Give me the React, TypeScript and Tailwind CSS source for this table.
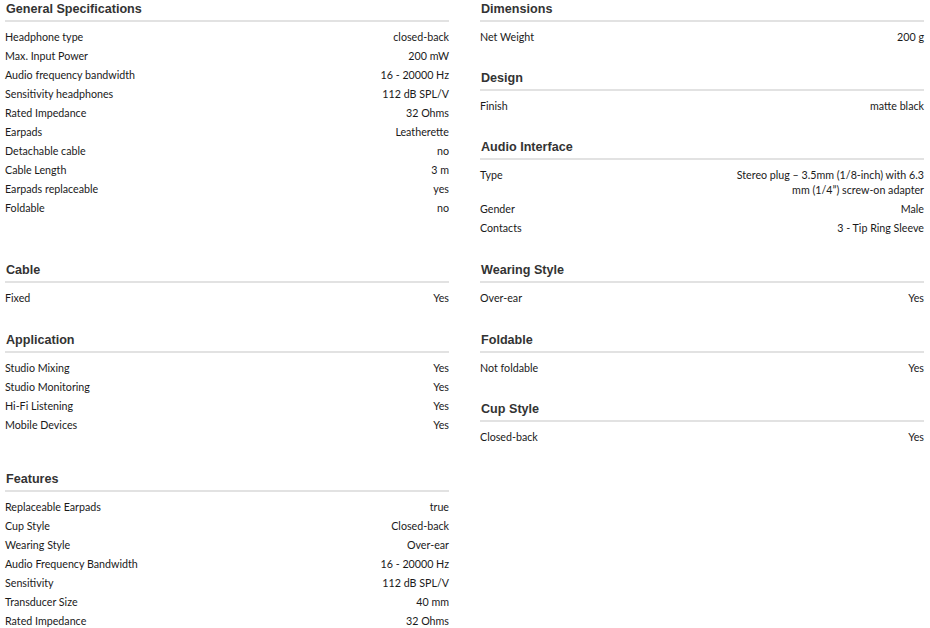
import React from 'react';

type Spec = [string, string];

interface Section {
  title: string;
  rows: Spec[];
}

const general: Section = {
  title: 'General Specifications',
  rows: [
    ['Headphone type', 'closed-back'],
    ['Max. Input Power', '200 mW'],
    ['Audio frequency bandwidth', '16 - 20000 Hz'],
    ['Sensitivity headphones', '112 dB SPL/V'],
    ['Rated Impedance', '32 Ohms'],
    ['Earpads', 'Leatherette'],
    ['Detachable cable', 'no'],
    ['Cable Length', '3 m'],
    ['Earpads replaceable', 'yes'],
    ['Foldable', 'no'],
  ],
};

const dimensions: Section = { title: 'Dimensions', rows: [['Net Weight', '200 g']] };
const design: Section = { title: 'Design', rows: [['Finish', 'matte black']] };
const audio: Section = {
  title: 'Audio Interface',
  rows: [
    ['Type', 'Stereo plug – 3.5mm (1/8-inch) with 6.3 mm (1/4”) screw-on adapter'],
    ['Gender', 'Male'],
    ['Contacts', '3 - Tip Ring Sleeve'],
  ],
};
const cable: Section = { title: 'Cable', rows: [['Fixed', 'Yes']] };
const wearing: Section = { title: 'Wearing Style', rows: [['Over-ear', 'Yes']] };
const application: Section = {
  title: 'Application',
  rows: [
    ['Studio Mixing', 'Yes'],
    ['Studio Monitoring', 'Yes'],
    ['Hi-Fi Listening', 'Yes'],
    ['Mobile Devices', 'Yes'],
  ],
};
const foldable: Section = { title: 'Foldable', rows: [['Not foldable', 'Yes']] };
const cupStyle: Section = { title: 'Cup Style', rows: [['Closed-back', 'Yes']] };
const features: Section = {
  title: 'Features',
  rows: [
    ['Replaceable Earpads', 'true'],
    ['Cup Style', 'Closed-back'],
    ['Wearing Style', 'Over-ear'],
    ['Audio Frequency Bandwidth', '16 - 20000 Hz'],
    ['Sensitivity', '112 dB SPL/V'],
    ['Transducer Size', '40 mm'],
    ['Rated Impedance', '32 Ohms'],
  ],
};

// left / right column per row of the grid
const layout: [Section[], Section[]][] = [
  [[general], [dimensions, design, audio]],
  [[cable], [wearing]],
  [[application], [foldable, cupStyle]],
  [[features], []],
];

function SpecSection({ section }: { section: Section }) {
  return (
    <div className="mb-[23px]">
      <h3 className="pl-[1px] pt-[1px] pb-[2px] border-b-2 border-[#e2e2e2] text-[12.6px] leading-[17px] font-bold text-[#333333] font-['Liberation_Sans',Arial,sans-serif]">
        {section.title}
      </h3>
      <div className="mt-[5px]">
        {section.rows.map(([label, value]) => (
          <div key={label} className="flex justify-between gap-4 py-[2px] text-[10.7px] leading-[15px] text-[#1a1a1a]">
            <span>{label}</span>
            <span className="text-right max-w-[192px]">{value}</span>
          </div>
        ))}
      </div>
    </div>
  );
}

export default function App() {
  return (
    <div className="w-[930px] h-[628px] overflow-hidden bg-white pl-[5px] font-['Lato','Open_Sans',sans-serif]">
      {layout.map(([left, right], i) => (
        <div key={i} className="grid grid-cols-[444px_444px] gap-x-[31px] mb-[1px]">
          <div>
            {left.map(s => (
              <SpecSection key={s.title} section={s} />
            ))}
          </div>
          <div>
            {right.map(s => (
              <SpecSection key={s.title} section={s} />
            ))}
          </div>
        </div>
      ))}
    </div>
  );
}
